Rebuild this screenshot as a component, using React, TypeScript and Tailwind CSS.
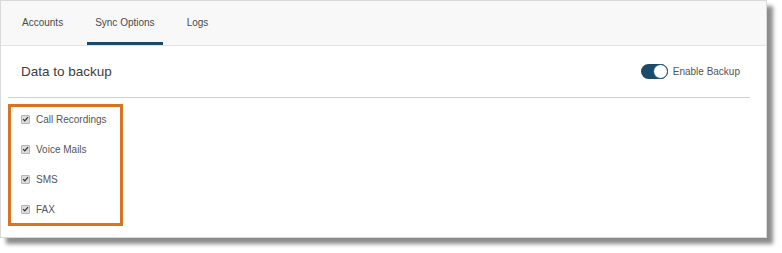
import { useState } from "react"

const items = ["Call Recordings", "Voice Mails", "SMS", "FAX"]
const tabs = ["Accounts", "Sync Options", "Logs"]

function Check() {
  return (
    <span className="flex h-[9px] w-[9px] items-center justify-center rounded-[1px] border border-[#b5b5b5] bg-[#dcdcdc]">
      <svg viewBox="0 0 10 10" className="h-[8px] w-[8px]">
        <path d="M1.5 5.2 L4 7.6 L8.6 2.2" fill="none" stroke="#333" strokeWidth="1.8" />
      </svg>
    </span>
  )
}

export default function App() {
  const [on, setOn] = useState(true)

  return (
    <div className="h-[253px] w-[782px] bg-white font-['Liberation_Sans',Arial,sans-serif] text-[#444]">
      <div className="h-[238px] w-[767px] border border-[#d9d9d9] bg-white shadow-[6px_6px_4px_rgba(0,0,0,0.45)]">
        {/* Tabs */}
        <div className="flex h-[45px] items-stretch gap-[16px] border-b border-[#e2e2e2] bg-[#f8f8f9] pl-[13px]">
          {tabs.map((t) => (
            <div
              key={t}
              className={
                "flex items-center border-b-[3px] px-2 pt-[2px] text-[10px] text-[#4a4a4a] " +
                (t === "Sync Options" ? "border-[#1b4a6b]" : "border-transparent")
              }
            >
              {t}
            </div>
          ))}
        </div>

        <div className="pl-[7px] pr-[16px]">
          {/* Header */}
          <div className="flex h-[52px] items-center justify-between border-b border-[#cfcfcf] pl-[13px] pr-[10px]">
            <h2 className="pt-[2px] text-[13.5px] text-[#3d3d3d]">Data to backup</h2>
            <div className="flex items-center gap-[5px]">
              <button
                onClick={() => setOn(!on)}
                className="relative h-[15px] w-[27px] rounded-full bg-[#1b4a6b]"
              >
                <span className="absolute right-[0px] top-[0px] h-[15px] w-[15px] rounded-full border border-[#1b4a6b] bg-white" />
              </button>
              <span className="text-[10px] text-[#555]">Enable Backup</span>
            </div>
          </div>

          {/* Items */}
          <div className="mt-[6px] flex w-[115px] flex-col gap-[14px] border-[3px] border-[#d8731f] pb-[6px] pl-[10px] pt-[4px]">
            {items.map((i) => (
              <label key={i} className="flex h-[16px] items-center gap-[6px] text-[10px] text-[#555]">
                <Check />
                {i}
              </label>
            ))}
          </div>
        </div>
      </div>
    </div>
  )
}
